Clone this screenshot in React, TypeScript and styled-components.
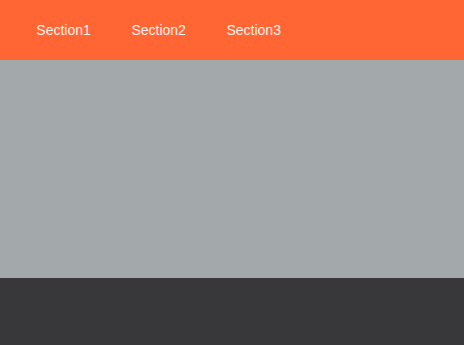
import React from "react";
import styled, { createGlobalStyle } from "styled-components";

const Global = createGlobalStyle`
  html, body { margin: 0; padding: 0; }
  body { font-family: "Liberation Sans", Arial, sans-serif; background: #38383b; }
`;

const Page = styled.div`
  display: flex;
  flex-direction: column;
  height: 345px;
  overflow: hidden;
`;

const NavBar = styled.nav`
  height: 60px;
  background: #ff6634;
  display: flex;
  align-items: center;
  padding-left: 16px;
`;

const NavItem = styled.a`
  color: #fff3ee;
  font-size: 14px;
  padding: 0 20.3px;
  text-decoration: none;
  line-height: 60px;
`;

const Content = styled.main`
  height: 218px;
  background: #a3a8ab;
`;

const Footer = styled.footer`
  flex: 1;
  background: #38383b;
`;

export default function App() {
  return (
    <>
      <Global />
      <Page>
        <NavBar>
          {["Section1", "Section2", "Section3"].map((s) => (
            <NavItem key={s}>{s}</NavItem>
          ))}
        </NavBar>
        <Content />
        <Footer />
      </Page>
    </>
  );
}
